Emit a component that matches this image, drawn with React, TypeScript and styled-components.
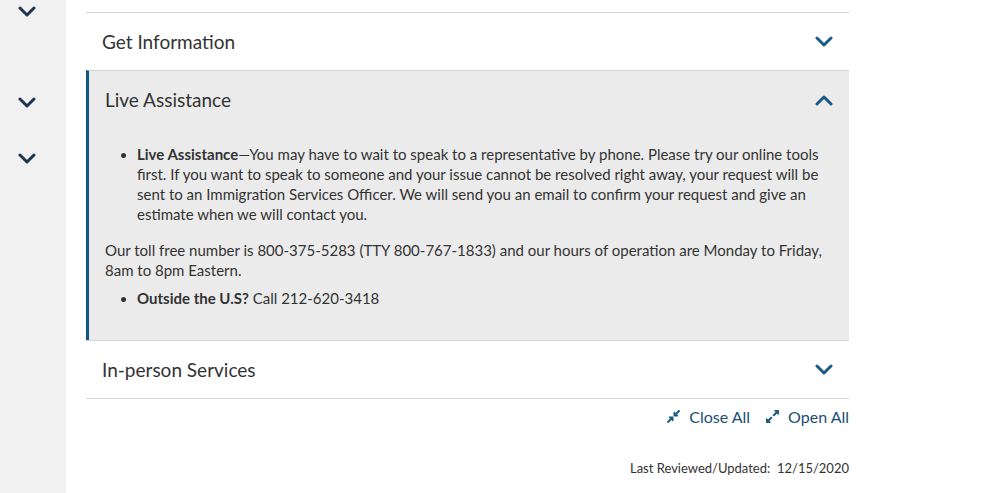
import styled, { createGlobalStyle } from 'styled-components';
import { FaCompressAlt, FaExpandAlt } from 'react-icons/fa';

const GlobalStyle = createGlobalStyle`
  html, body { margin: 0; padding: 0; background: #fff; }
  body { font-family: "Lato", "Liberation Sans", sans-serif; color: #333; }
`;

function Chevron({ up, color }: { up?: boolean; color: string }) {
  return (
    <svg width="18" height="12" viewBox="0 0 18 12">
      <polyline
        points={up ? '2,10 9,3 16,10' : '2,2 9,9 16,2'}
        fill="none"
        stroke={color}
        strokeWidth="3"
        strokeLinecap="round"
        strokeLinejoin="round"
      />
    </svg>
  );
}

export default function App() {
  const sideItems = [{ top: 6 }, { top: 79 }, { top: 44 }];

  return (
    <Page>
      <GlobalStyle />
      <Sidebar>
        {sideItems.map((item, i) => (
          <SideItem key={i} $top={item.top}>
            <Chevron color="#1c3552" />
          </SideItem>
        ))}
      </Sidebar>
      <Main>
        <Accordion>
          <Item>
            <Header>
              <Title>Get Information</Title>
              <Chevron color="#1a5a84" />
            </Header>
          </Item>
          <Item $open>
            <Header>
              <Title>Live Assistance</Title>
              <Chevron up color="#1a5a84" />
            </Header>
            <Body>
              <List>
                <li>
                  <b>Live Assistance</b>—You may have to wait to speak to a representative by phone. Please try our online tools first. If you want to speak to someone and your issue cannot be resolved right away, your request will be sent to an Immigration Services Officer. We will send you an email to confirm your request and give an estimate when we will contact you.
                </li>
              </List>
              <Para>
                Our toll free number is 800-375-5283 (TTY 800-767-1833) and our hours of operation are Monday to Friday, 8am to 8pm Eastern.
              </Para>
              <List $tight>
                <li>
                  <b>Outside the U.S?</b> Call 212-620-3418
                </li>
              </List>
            </Body>
          </Item>
          <Item $last>
            <Header>
              <Title>In-person Services</Title>
              <Chevron color="#1a5a84" />
            </Header>
          </Item>
        </Accordion>
        <Controls>
          <Control>
            <FaCompressAlt size={15} />
            Close All
          </Control>
          <Control>
            <FaExpandAlt size={15} />
            Open All
          </Control>
        </Controls>
        <Reviewed>Last Reviewed/Updated:&nbsp; 12/15/2020</Reviewed>
      </Main>
    </Page>
  );
}

const Page = styled.div`
  display: flex;
  width: 1004px;
  height: 493px;
  overflow: hidden;
`;
const Sidebar = styled.div`
  width: 66px;
  flex-shrink: 0;
  background: #f1f1f1;
  display: flex;
  flex-direction: column;
  align-items: center;
  padding-right: 12px;
  box-sizing: border-box;
`;
const SideItem = styled.div<{ $top: number }>`
  margin-top: ${(p) => p.$top}px;
  height: 12px;
  display: flex;
`;
const Main = styled.div`
  width: 763px;
  margin-left: 20px;
  padding-top: 12px;
  display: flex;
  flex-direction: column;
`;
const Accordion = styled.div`
  display: flex;
  flex-direction: column;
`;
const Item = styled.div<{ $open?: boolean; $last?: boolean }>`
  border-top: 1px solid #d4d4d4;
  border-bottom: ${(p) => (p.$last ? '1px solid #d4d4d4' : 'none')};
  background: ${(p) => (p.$open ? '#ebebeb' : '#fff')};
  border-left: ${(p) => (p.$open ? '3px solid #105782' : 'none')};
`;
const Header = styled.div`
  height: 57px;
  display: flex;
  align-items: center;
  justify-content: space-between;
  padding: 0 16px;
`;
const Title = styled.span`
  font-size: 19px;
  color: #333;
`;
const Body = styled.div`
  padding: 16px 16px 32px 16px;
  font-size: 15px;
  line-height: 20px;
  color: #333;
`;
const List = styled.ul<{ $tight?: boolean }>`
  margin: 0 0 ${(p) => (p.$tight ? 0 : 16)}px;
  padding-left: 32px;
  padding-right: 14px;
  li::marker { font-size: 14px; }
`;
const Para = styled.p`
  margin: 0 0 8px;
`;
const Controls = styled.div`
  display: flex;
  justify-content: flex-end;
  gap: 15px;
  margin-top: 8px;
`;
const Control = styled.span`
  display: flex;
  align-items: center;
  gap: 8px;
  font-size: 16px;
  color: #1b4f73;
  svg { color: #1b5b84; }
`;
const Reviewed = styled.div`
  text-align: right;
  font-size: 13px;
  margin-top: 34px;
  color: #333;
`;
